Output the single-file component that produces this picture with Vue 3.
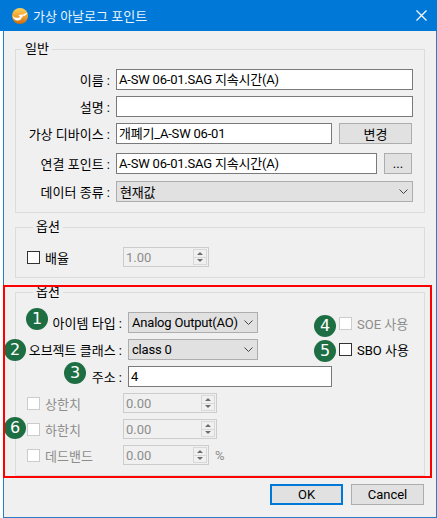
<script setup>
const disabledRows = [
  { label: '상한치', wide: true, badge: false },
  { label: '하한치', wide: true, badge: true },
  { label: '데드밴드', wide: false, badge: false },
]
</script>

<template>
  <div class="dialog">
    <div class="titlebar">
      <svg class="app-icon" width="16" height="16" viewBox="0 0 16 16">
        <defs>
          <linearGradient id="orb" x1="0" y1="0" x2="0" y2="1">
            <stop offset="0" stop-color="#fcd25a" />
            <stop offset="0.55" stop-color="#f0a02c" />
            <stop offset="1" stop-color="#c9690f" />
          </linearGradient>
        </defs>
        <circle cx="8" cy="8" r="8" fill="url(#orb)" />
        <path d="M0.5 8 C3 10 6 10.5 8 9 C7.5 8.2 7 7.6 6.5 7 L11 6.5 L10.5 9.5 L9.5 9.5 C9.5 11.5 7.5 13 5 12.5 C3 12 1.2 10.5 0.5 8 Z M11 6.5 C12.5 6 14 5.2 15.5 4.5 C15 6 13.5 7.5 11.5 8.2 Z" fill="#fff" />
      </svg>
      <span class="title">가상 아날로그 포인트</span>
      <svg class="close" width="11" height="11" viewBox="0 0 11 11">
        <path d="M0.5 0.5 L10.5 10.5 M10.5 0.5 L0.5 10.5" stroke="#fff" stroke-width="1.2" fill="none" />
      </svg>
    </div>

    <div class="body">
      <fieldset class="group general">
        <legend>일반</legend>
        <div class="row">
          <label class="lbl">이름 :</label>
          <div class="input grow">A-SW 06-01.SAG 지속시간(A)</div>
        </div>
        <div class="row">
          <label class="lbl">설명 :</label>
          <div class="input grow"></div>
        </div>
        <div class="row loose">
          <label class="lbl">가상 디바이스 :</label>
          <div class="input grow">개폐기_A-SW 06-01</div>
          <button class="btn change">변경</button>
        </div>
        <div class="row mid">
          <label class="lbl">연결 포인트 :</label>
          <div class="input grow">A-SW 06-01.SAG 지속시간(A)</div>
          <button class="btn dots">...</button>
        </div>
        <div class="row">
          <label class="lbl">데이터 종류 :</label>
          <div class="select grow">
            <span>현재값</span>
            <svg class="chev" width="9" height="5" viewBox="0 0 9 5"><path d="M0.5 0.5 L4.5 4.5 L8.5 0.5" fill="none" stroke="#444" /></svg>
          </div>
        </div>
      </fieldset>

      <fieldset class="group scale">
        <legend>옵션</legend>
        <div class="check-row off-spin">
          <span class="check"></span>
          <span class="check-label">배율</span>
          <div class="spin narrow">
            <span>1.00</span>
            <span class="arrows"><b><i class="up"></i></b><b><i class="down"></i></b></span>
          </div>
        </div>
      </fieldset>

      <fieldset class="group options">
        <legend>옵션</legend>
        <div class="opt-top">
          <div class="opt-fields">
            <div class="row opt">
              <label class="lbl opt-lbl">아이템 타입 :</label>
              <div class="select short">
                <span>Analog Output(AO)</span>
                <svg class="chev" width="9" height="5" viewBox="0 0 9 5"><path d="M0.5 0.5 L4.5 4.5 L8.5 0.5" fill="none" stroke="#444" /></svg>
              </div>
            </div>
            <div class="row opt">
              <label class="lbl opt-lbl">오브젝트 클래스 :</label>
              <div class="select short">
                <span>class 0</span>
                <svg class="chev" width="9" height="5" viewBox="0 0 9 5"><path d="M0.5 0.5 L4.5 4.5 L8.5 0.5" fill="none" stroke="#444" /></svg>
              </div>
            </div>
            <div class="row opt">
              <label class="lbl opt-lbl">주소 :</label>
              <div class="input addr">4</div>
            </div>
          </div>
          <div class="opt-checks">
            <div class="check-row use off">
              <span class="check"></span>
              <span class="check-label">SOE 사용</span>
              <span class="badge b4">4</span>
            </div>
            <div class="check-row use">
              <span class="check"></span>
              <span class="check-label">SBO 사용</span>
              <span class="badge b5">5</span>
            </div>
          </div>
          <span class="badge b1">1</span>
          <span class="badge b2">2</span>
          <span class="badge b3">3</span>
        </div>

        <div class="limits">
          <div v-for="r in disabledRows" :key="r.label" class="check-row limit off">
            <span class="check"></span>
            <span class="check-label">{{ r.label }}</span>
            <div class="spin" :class="r.wide ? 'wide' : 'narrow'">
              <span>0.00</span>
              <span class="arrows"><b><i class="up"></i></b><b><i class="down"></i></b></span>
            </div>
            <span v-if="!r.wide" class="unit">%</span>
            <span v-if="r.badge" class="badge b6">6</span>
          </div>
        </div>
      </fieldset>

      <div class="footer">
        <button class="btn action default">OK</button>
        <button class="btn action">Cancel</button>
      </div>

      <div class="highlight"></div>
    </div>
  </div>
</template>

<style>
html, body {
  margin: 0;
  background: #fff;
}
</style>

<style scoped>
.dialog {
  width: 437px;
  height: 518px;
  box-sizing: border-box;
  font-family: Roboto, "Noto Sans CJK KR", sans-serif;
  font-size: 13px;
  color: #000;
  display: flex;
  flex-direction: column;
  overflow: hidden;
}

/* TITLE BAR */
.titlebar {
  height: 31px;
  flex: none;
  background: #0078d7;
  display: flex;
  align-items: center;
  padding: 0 10px 0 12px;
  color: #fff;
}
.title {
  margin-left: 5px;
  font-size: 13px;
  color: #eaf4fc;
}
.close {
  margin-left: auto;
}

/* BODY */
.body {
  position: relative;
  flex: 1;
  margin-left: 3px;
  background: #f0f0f0;
  border: 1px solid #2b7cc4;
  border-top: none;
  padding: 0 11px;
  box-sizing: border-box;
}

.group {
  margin: 0;
  border: 1px solid #dcdcdc;
  min-width: 0;
  box-sizing: border-box;
}
.group legend {
  margin-left: 6px;
  padding: 0 3px;
  line-height: 16px;
  height: 16px;
}
.general {
  margin-top: 10px;
  height: 172px;
  padding: 12px 11px 0 0;
}
.scale {
  margin-top: 6px;
  height: 59px;
  padding: 12px 0 0 11px;
}
.options {
  margin-top: 6px;
  height: 192px;
  padding: 12px 0 0 11px;
}

.row {
  display: flex;
  align-items: center;
  height: 21px;
  margin-bottom: 6px;
}
.row.loose {
  margin-bottom: 9px;
}
.row.mid {
  margin-bottom: 7px;
}
.lbl {
  width: 94px;
  flex: none;
  text-align: right;
  margin-right: 6px;
  white-space: nowrap;
}
.grow {
  flex: 1;
  min-width: 0;
}
.input {
  height: 21px;
  box-sizing: border-box;
  background: #fff;
  border: 1px solid #7a7a7a;
  padding: 0 2px;
  line-height: 19px;
  letter-spacing: -0.2px;
  white-space: nowrap;
  overflow: hidden;
}
.select {
  height: 21px;
  box-sizing: border-box;
  background: #e1e1e1;
  border: 1px solid #adadad;
  padding: 0 4px 0 3px;
  display: flex;
  align-items: center;
  justify-content: space-between;
  letter-spacing: -0.2px;
  white-space: nowrap;
}
.chev {
  flex: none;
}
.btn {
  font: inherit;
  color: inherit;
  padding: 0;
  background: #e1e1e1;
  border: 1px solid #adadad;
  box-sizing: border-box;
  height: 21px;
  flex: none;
}
.change {
  width: 73px;
  margin: 0 1px 0 7px;
}
.dots {
  width: 28px;
  margin: 0 1px 0 7px;
}

/* CHECKBOX ROWS */
.check-row {
  display: flex;
  align-items: center;
  position: relative;
}
.check {
  width: 13px;
  height: 13px;
  box-sizing: border-box;
  background: #fff;
  border: 1px solid #333;
  flex: none;
}
.check-label {
  margin-left: 5px;
  white-space: nowrap;
}
.off .check {
  border-color: #ccc;
}
.off .check-label,
.off .unit {
  color: #8d8d8d;
}

.spin {
  height: 20px;
  box-sizing: border-box;
  border: 1px solid #ccc;
  display: flex;
  align-items: center;
  justify-content: space-between;
  padding: 0 1px 0 2px;
  color: #8d8d8d;
  position: absolute;
  left: 96px;
}
.narrow {
  width: 86px;
}
.wide {
  width: 94px;
}
.off-spin {
  height: 20px;
}
.arrows {
  width: 14px;
  height: 16px;
  border: 1px solid #d8d8d8;
  box-sizing: border-box;
  display: flex;
  flex-direction: column;
}
.arrows b {
  flex: 1;
  display: flex;
  align-items: center;
  justify-content: center;
}
.arrows b + b {
  border-top: 1px solid #d8d8d8;
}
.arrows i {
  width: 0;
  height: 0;
  border-left: 3px solid transparent;
  border-right: 3px solid transparent;
}
.arrows .up {
  border-bottom: 3px solid #6d6d6d;
}
.arrows .down {
  border-top: 3px solid #6d6d6d;
}

/* OPTIONS GROUP */
.opt-top {
  display: flex;
  position: relative;
}
.opt-fields {
  width: 316px;
  flex: none;
}
.opt-lbl {
  width: 95px;
}
.short {
  width: 130px;
}
.addr {
  width: 204px;
}
.opt-checks {
  margin-left: -4px;
  padding-top: 5px;
  display: flex;
  flex-direction: column;
  gap: 13px;
}
.use {
  height: 13px;
}
.limits {
  display: flex;
  flex-direction: column;
}
.limit {
  height: 20px;
  margin-bottom: 6px;
}
.unit {
  position: absolute;
  left: 188px;
}

/* BADGES */
.badge {
  position: absolute;
  width: 22px;
  height: 22px;
  border-radius: 50%;
  background: #1e6e43;
  color: #fff;
  font-family: "DejaVu Sans", sans-serif;
  font-size: 16px;
  line-height: 22px;
  text-align: center;
}
.b1 {
  left: -1px;
  top: -4px;
}
.b2 {
  left: -23px;
  top: 27px;
}
.b3 {
  left: 37px;
  top: 50px;
}
.b4 {
  left: -25px;
  top: -2px;
}
.b5 {
  left: -25px;
  top: -3px;
}
.b6 {
  left: -23px;
  top: -2px;
}

/* FOOTER */
.footer {
  display: flex;
  justify-content: flex-end;
  gap: 8px;
  margin-top: 8px;
  padding-right: 1px;
}
.action {
  width: 73px;
  height: 21px;
}
.default {
  border: 2px solid #0078d7;
}

/* ANNOTATION */
.highlight {
  position: absolute;
  left: -1px;
  top: 254px;
  width: 429px;
  height: 193px;
  box-sizing: border-box;
  border: 2px solid #f00;
  pointer-events: none;
}
</style>
